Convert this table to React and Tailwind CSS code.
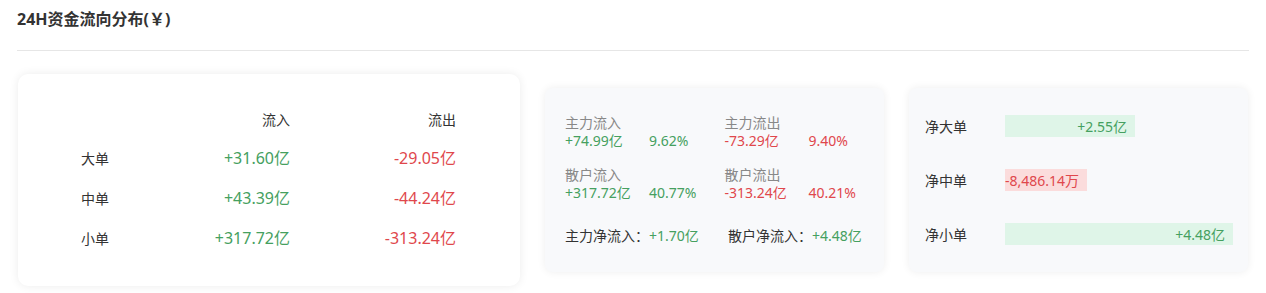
import React from "react";

const font = { fontFamily: '"Noto Sans", "Noto Sans CJK SC", sans-serif' };

const G = "text-[#45a060]";
const R = "text-[#e0474c]";

function Card1() {
  const rows = [
    ["大单", "+31.60亿", "-29.05亿"],
    ["中单", "+43.39亿", "-44.24亿"],
    ["小单", "+317.72亿", "-313.24亿"],
  ];
  return (
    <div className="shrink-0 w-[502px] h-[212px] bg-white rounded-[10px] shadow-[0_0_10px_rgba(0,0,0,0.08)] pt-[26px] pl-[63px]">
      <div className="grid grid-cols-[100px_109px_166px] h-[38px] items-center text-[14px] text-[#333]">
        <div></div>
        <div className="text-right">流入</div>
        <div className="text-right">流出</div>
      </div>
      {rows.map((r) => (
        <div key={r[0]} className="grid grid-cols-[100px_109px_166px] h-[40px] items-center">
          <div className="text-[14px] text-[#333]">{r[0]}</div>
          <div className={`text-right text-[16px] ${G}`}>{r[1]}</div>
          <div className={`text-right text-[16px] ${R}`}>{r[2]}</div>
        </div>
      ))}
    </div>
  );
}

function Stat({ label, value, pct, color }) {
  return (
    <div className="w-[163px]">
      <div className="text-[14px] leading-[18px] text-[#888]">{label}</div>
      <div className={`flex text-[14px] leading-[18px] ${color}`}>
        <span className="w-[84px]">{value}</span>
        <span>{pct}</span>
      </div>
    </div>
  );
}

function Card2() {
  return (
    <div className="shrink-0 w-[339px] h-[184px] bg-[#f8f9fb] rounded-[8px] shadow-[0_0_8px_rgba(0,0,0,0.07)] pl-[20px] pt-[26px]">
      <div className="flex">
        <Stat label="主力流入" value="+74.99亿" pct="9.62%" color={G} />
        <Stat label="主力流出" value="-73.29亿" pct="9.40%" color={R} />
      </div>
      <div className="flex mt-[16px]">
        <Stat label="散户流入" value="+317.72亿" pct="40.77%" color={G} />
        <Stat label="散户流出" value="-313.24亿" pct="40.21%" color={R} />
      </div>
      <div className="flex mt-[25px] text-[14px] leading-[18px]">
        <div className="w-[163px] text-[#333]">
          主力净流入：<span className={G}>+1.70亿</span>
        </div>
        <div className="text-[#333]">
          散户净流入：<span className={G}>+4.48亿</span>
        </div>
      </div>
    </div>
  );
}

function Card3() {
  const rows = [
    ["净大单", "+2.55亿", 2.55, true],
    ["净中单", "-8,486.14万", 0.8486, false],
    ["净小单", "+4.48亿", 4.48, true],
  ];
  return (
    <div className="shrink-0 w-[339px] h-[184px] bg-[#f8f9fb] rounded-[8px] shadow-[0_0_8px_rgba(0,0,0,0.07)] pl-[16px] pt-[27px] flex flex-col gap-[32px]">
      {rows.map(([label, text, v, pos]) => (
        <div key={label} className="flex items-center h-[22px]">
          <div className="w-[80px] text-[14px] text-[#333]">{label}</div>
          <div
            className={`h-[22px] flex items-center justify-end pr-[8px] text-[14px] whitespace-nowrap ${
              pos ? "bg-[#dff5e8] " + G : "bg-[#fbdcdc] " + R
            }`}
            style={{ width: Math.round((v / 4.48) * 228) + "px", minWidth: "max-content" }}
          >
            {text}
          </div>
        </div>
      ))}
    </div>
  );
}

export default function App() {
  return (
    <div className="bg-white w-[1266px] h-[293px] px-[17px]" style={font}>
      <div className="h-[51px] border-b border-[#e6e6e6] flex items-start pt-[8px]">
        <div className="text-[16px] font-bold text-[#333] leading-[22px]">24H资金流向分布(￥)</div>
      </div>
      <div className="flex items-center gap-[25px] mt-[23px] pl-[1px]">
        <Card1 />
        <Card2 />
        <Card3 />
      </div>
    </div>
  );
}
